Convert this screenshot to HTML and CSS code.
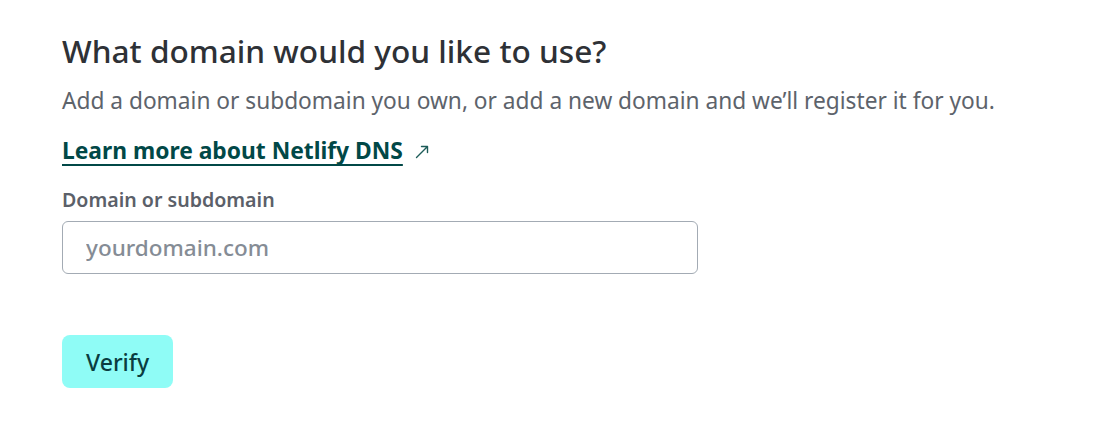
FILE: index.html
```html
<!DOCTYPE html>
<html lang="en">
<head>
<meta charset="utf-8">
<title>Add domain</title>
<link rel="stylesheet" href="styles.css">
</head>
<body>
<main class="panel">
  <h1 class="title">What domain would you like to use?</h1>
  <p class="lead">Add a domain or subdomain you own, or add a new domain and we’ll register it for you.</p>
  <p class="learn"><a class="learn-link" href="#">Learn more about Netlify DNS</a><svg class="ext" width="14" height="14" viewBox="0 0 14 14" aria-hidden="true"><path d="M1.5 12.5 L12.5 1.5 M6.5 1.5 H12.5 V7.5" fill="none" stroke="#1d5c59" stroke-width="1.4" stroke-linecap="round" stroke-linejoin="round"/></svg></p>
  <form class="form">
    <label class="label" for="domain">Domain or subdomain</label>
    <input class="input" id="domain" type="text" placeholder="yourdomain.com">
    <button class="btn" type="button">Verify</button>
  </form>
</main>
</body>
</html>
```

FILE: styles.css
```css
html, body {
  margin: 0;
  background: #ffffff;
}
body {
  font-family: "Noto Sans", "Open Sans", sans-serif;
}
.panel {
  padding: 31px 0 0 62px;
}
.title {
  margin: 0;
  font-size: 31.6px;
  font-weight: 500;
  line-height: 40px;
  color: #2e3136;
}
.lead {
  margin: 14px 0 0;
  font-size: 22.7px;
  line-height: 32px;
  color: #5d636b;
}
.learn {
  margin: 18px 0 0;
  font-size: 22.8px;
  line-height: 32px;
  display: flex;
  align-items: center;
  gap: 12px;
}
.learn-link {
  color: #014847;
  font-weight: 700;
  text-decoration: underline;
  text-underline-offset: 5px;
  text-decoration-thickness: 2px;
}
.ext {
  display: block;
  margin-top: 2px;
}
.form {
  display: flex;
  flex-direction: column;
  align-items: flex-start;
  margin-top: 20px;
}
.label {
  font-size: 19.6px;
  font-weight: 600;
  line-height: 26px;
  color: #5b6069;
}
.input {
  margin-top: 8px;
  box-sizing: border-box;
  width: 636px;
  height: 53px;
  border: 1px solid #a3abb4;
  border-radius: 6px;
  padding: 0 23px;
  font-family: inherit;
  font-size: 22.5px;
  color: #2e3136;
}
.input::placeholder {
  color: #858c95;
  font-weight: 500;
}
.btn {
  margin-top: 61px;
  height: 53px;
  padding: 0 24px;
  border: none;
  border-radius: 8px;
  background: #8ffcf6;
  color: #0a3d40;
  font-family: inherit;
  font-size: 23px;
  font-weight: 500;
}
```
